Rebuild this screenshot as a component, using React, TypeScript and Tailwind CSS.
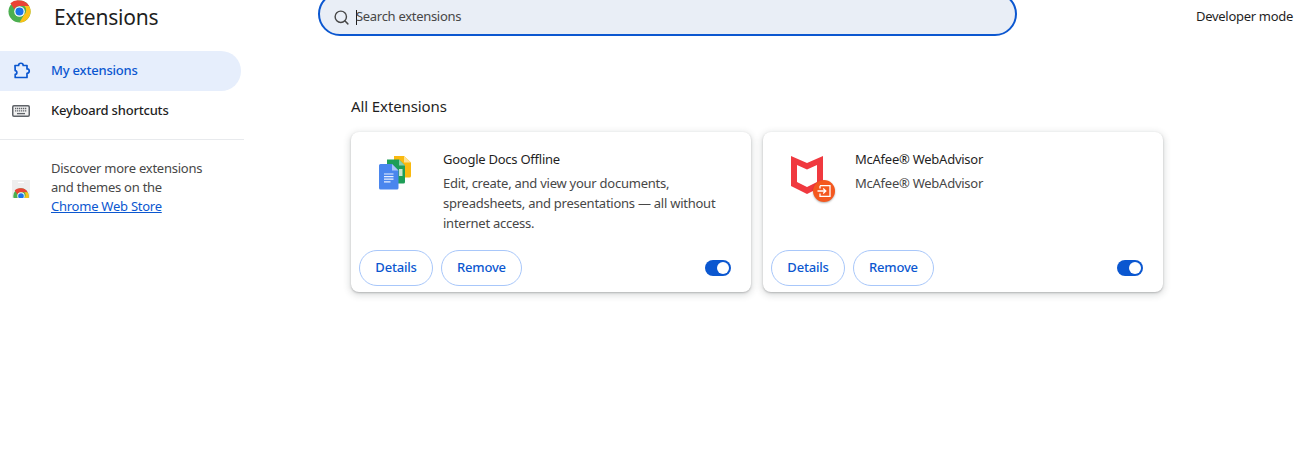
import { Search } from "lucide-react";

const font = { fontFamily: '"Noto Sans", "Open Sans", sans-serif' };

function ChromeIcon({ size = 24 }: { size?: number }) {
  return (
    <svg width={size} height={size} viewBox="0 0 48 48" className="block shrink-0">
      <circle cx="24" cy="24" r="23" fill="#4caf50" />
      <path d="M24 1a23 23 0 0 1 20 11.5H24a11.5 11.5 0 0 0-10.6 7L5 6.8A23 23 0 0 1 24 1z" fill="#ea4335" />
      <path d="M44 12.5A23 23 0 0 1 24 47l10-17.2a11.5 11.5 0 0 0 0-17.3z" fill="#fbc116" />
      <circle cx="24" cy="24" r="11" fill="#fff" />
      <circle cx="24" cy="24" r="8.5" fill="#1a73e8" />
    </svg>
  );
}

function PuzzleIcon() {
  return (
    <svg width="20" height="20" viewBox="0 0 20 20" fill="none" stroke="#0b57d0" strokeWidth="1.7" strokeLinejoin="round">
      <path d="M3 4.5h3.6c0-3 4.6-3 4.6 0H15v3.4c3 0 3 4.4 0 4.4v4.2H3.2v-3.2c2.2 0 2.2-3.6 0-3.6z" />
    </svg>
  );
}

function KeyboardIcon() {
  return (
    <svg width="18" height="12" viewBox="0 0 18 12">
      <rect x="0.75" y="0.75" width="16.5" height="10.5" rx="1.2" fill="#f1f1f1" stroke="#5f6368" strokeWidth="1.5" />
      <path d="M3 3.5h12M3 5.8h12" stroke="#5f6368" strokeWidth="1.3" strokeDasharray="1.3 .7" />
      <path d="M5 8.6h8" stroke="#5f6368" strokeWidth="1.3" />
    </svg>
  );
}

function StoreIcon() {
  return (
    <div className="w-[18px] h-[18px] bg-[#eeeeee] overflow-hidden relative">
      <div className="absolute left-[6px] top-[2px] w-[6px] h-[1px] bg-white" />
      <div className="absolute left-[1px] top-[8px]">
        <ChromeIcon size={16} />
      </div>
    </div>
  );
}

function DocsIcon() {
  return (
    <svg width="34" height="34" viewBox="0 0 34 34" className="block">
      <path d="M15 0h10l7 6.5V20a1.5 1.5 0 0 1-1.500 1.500H15z" fill="#f9b90f" />
      <path d="M25 0l7 6.500h-7z" fill="#fde293" />
      <path d="M8 3.500h12l6 6V26a1.500 1.500 0 0 1-1.500 1.500H8z" fill="#1e9e57" />
      <path d="M20 3.500l6 6h-6z" fill="#87ceac" />
      <rect x="20" y="13" width="3.500" height="7" fill="#c8e6d0" />
      <path d="M1.500 8H13l6.500 6.500V32a1.500 1.500 0 0 1-1.500 1.500H1.500A1.500 1.500 0 0 1 0 32V9.500A1.500 1.500 0 0 1 1.500 8z" fill="#4a86ee" />
      <path d="M13 8l6.500 6.500H13z" fill="#a9c6f8" />
      <path d="M5 18h9.500M5 20.600h9.500M5 23.200h9.500M5 25.800h6.500" stroke="#e8f0fe" strokeWidth="1.200" />
    </svg>
  );
}

function McAfeeIcon() {
  return (
    <div className="relative w-[46px] h-[48px]">
      <svg width="32" height="38" viewBox="0 0 32 38" className="block">
        <path d="M0 0l16 7L32 0v30l-16 8L0 30zM6 9v17l10 5 10-5V9l-10 4.500z" fill="#f0393f" fillRule="evenodd" />
      </svg>
      <div className="absolute left-[22px] top-[24px] w-[22px] h-[22px] rounded-full bg-[#f4581f] flex items-center justify-center shadow-[0_1px_2px_rgba(0,0,0,0.3)]">
        <svg width="14" height="12" viewBox="0 0 14 12" fill="none" stroke="#fff" strokeWidth="1.300">
          <path d="M3 .7h10v10.600H3V8.500M3 3.500V.7M.5 6h8M6.200 3.600 8.800 6 6.200 8.400" />
        </svg>
      </div>
    </div>
  );
}

function Toggle() {
  return (
    <div className="w-[26px] h-[16px] rounded-full bg-[#0b57d0] flex items-center justify-end pr-[2px]">
      <div className="w-[12px] h-[12px] rounded-full bg-white" />
    </div>
  );
}

function Pill({ label, width }: { label: string; width: string }) {
  return (
    <button className={`${width} h-[36px] rounded-full border border-[#a8c7fa] bg-white text-[13px] font-medium text-[#0b57d0] flex items-center justify-center tracking-[-0.2px]`}>
      {label}
    </button>
  );
}

function ExtCard({ icon, name, desc }: { icon: React.ReactNode; name: string; desc: React.ReactNode }) {
  return (
    <div className="w-[400px] h-[160px] rounded-lg bg-white shadow-[0_1px_2px_rgba(60,64,67,0.3),0_2px_6px_2px_rgba(60,64,67,0.15)] flex flex-col">
      <div className="flex h-[118px]">
        <div className="w-[92px] pl-[28px] pt-[24px] shrink-0">{icon}</div>
        <div className="flex-1 pt-[17px] pr-[20px]">
          <div className="text-[13px] leading-[20px] text-[#1f1f1f] tracking-[-0.25px]">{name}</div>
          <div className="mt-[4px] text-[13px] leading-[20px] text-[#474747] tracking-[-0.25px]">{desc}</div>
        </div>
      </div>
      <div className="flex items-center gap-[8px] pl-[8px] pr-[20px]">
        <Pill label="Details" width="w-[74px]" />
        <Pill label="Remove" width="w-[81px]" />
        <div className="ml-auto">
          <Toggle />
        </div>
      </div>
    </div>
  );
}

export default function App() {
  return (
    <div style={font} className="w-[1296px] h-[465px] bg-white overflow-hidden text-[#1f1f1f]">
      <header className="h-[36px] flex items-end relative">
        <div className="w-[318px] h-[36px] flex items-start pl-[8px] shrink-0">
          <ChromeIcon size={23} />
          <h1 className="ml-[23px] mt-[2px] text-[21px] leading-[30px] font-normal tracking-[-0.2px] text-[#1f1f1f]">Extensions</h1>
        </div>
        <div className="w-[699px] h-[44px] shrink-0 rounded-full bg-[#e9eef6] border-2 border-[#0b57d0] flex items-center pl-[13px] mt-[-8px] pt-[6px]">
          <Search size={17} strokeWidth={2} className="text-[#474747]" />
          <div className="ml-[6px] w-[1px] h-[15px] bg-[#1f1f1f]" />
          <span className="text-[13px] tracking-[-0.3px] text-[#474747] ml-[-1px]">Search extensions</span>
        </div>
        <div className="ml-auto self-start mt-[6px] pr-[3px] text-[13px] leading-[20px] tracking-[-0.3px] text-[#1f1f1f]">Developer mode</div>
      </header>

      <div className="flex">
        <aside className="w-[244px] shrink-0 pt-[15px]">
          <div className="w-[241px] h-[40px] rounded-r-full bg-[#e6eefc] flex items-center pl-[12px] text-[#0b57d0]">
            <PuzzleIcon />
            <span className="ml-[19px] text-[13px] font-medium tracking-[-0.2px]">My extensions</span>
          </div>
          <div className="h-[40px] flex items-center pl-[12px]">
            <KeyboardIcon />
            <span className="ml-[21px] text-[13px] font-medium tracking-[-0.2px] text-[#1f1f1f]">Keyboard shortcuts</span>
          </div>
          <div className="mt-[8px] h-[1px] bg-[#e8eaed]" />
          <div className="flex items-center mt-[19px] pl-[12px]">
            <div className="pt-[2px]"><StoreIcon /></div>
            <p className="ml-[21px] text-[13px] leading-[19px] text-[#474747] tracking-[-0.25px]">
              Discover more extensions
              <br />
              and themes on the
              <br />
              <a className="text-[#0b57d0] underline">Chrome Web Store</a>
            </p>
          </div>
        </aside>

        <main className="pl-[107px] pt-[60px]">
          <h2 className="text-[15px] leading-[20px] font-normal tracking-[-0.1px] text-[#1f1f1f]">All Extensions</h2>
          <div className="mt-[16px] flex gap-[12px]">
            <ExtCard
              icon={<DocsIcon />}
              name="Google Docs Offline"
              desc={
                <>
                  Edit, create, and view your documents,
                  <br />
                  spreadsheets, and presentations — all without
                  <br />
                  internet access.
                </>
              }
            />
            <ExtCard icon={<McAfeeIcon />} name="McAfee® WebAdvisor" desc="McAfee® WebAdvisor" />
          </div>
        </main>
      </div>
    </div>
  );
}
